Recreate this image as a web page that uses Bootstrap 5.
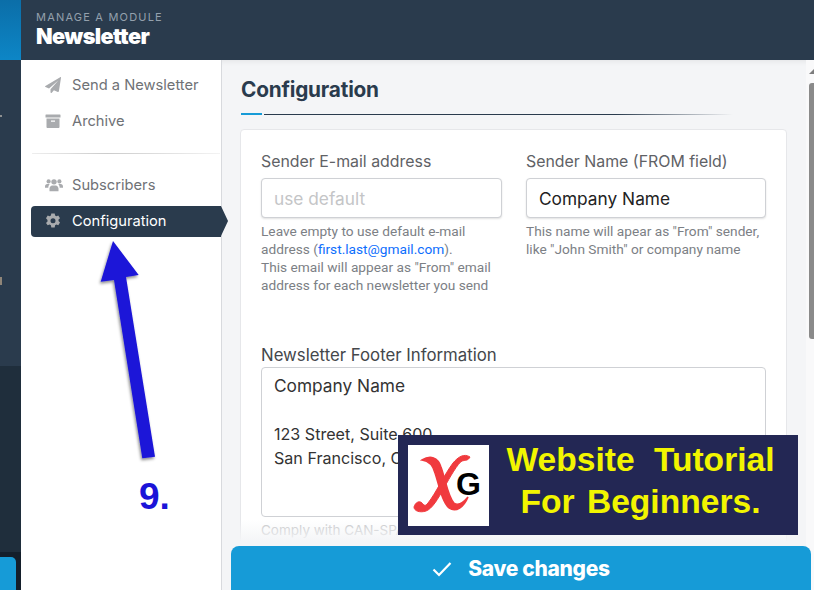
<!DOCTYPE html>
<html lang="en">
<head>
    <meta charset="UTF-8">
    <meta name="viewport" content="width=device-width, initial-scale=1.0">
    <title>Newsletter Configuration</title>
    <link rel="stylesheet" href="https://cdn.jsdelivr.net/npm/bootstrap@5.3.0/dist/css/bootstrap.min.css">
    <script src="https://cdn.jsdelivr.net/npm/bootstrap@5.3.0/dist/js/bootstrap.bundle.min.js"></script>
    <style>
        html, body { height: 100%; overflow: hidden; }
        body { font-family: "Inter", "Liberation Sans", sans-serif; background: #f4f5f7; }
        .app-shell { width: 814px; height: 590px; position: relative; overflow: hidden; }
        .left-rail { width: 21px; background: #2a3b4d; position: relative; }
        .rail-logo { height: 60px; background: linear-gradient(#0b6ea8, #0d86c6); }
        .rail-top { height: 306px; background: #2a3b4d; }
        .rail-mid { height: 186px; background: #1f2e3c; }
        .rail-bottom { flex: 1; background: #141f2b; padding-top: 5px; }
        .rail-tab { width: 16px; height: 33px; background: #169bd7; border-top-right-radius: 5px; }
        .rail-speck { position: absolute; left: 0; width: 2px; background: #8d8f90; }
        .speck-one { top: 115px; height: 2px; }
        .speck-two { top: 277px; height: 8px; background: #8f8578; }
        .module-head { height: 60px; background: #2a3b4d; padding-left: 15px; padding-top: 10px; }
        .module-over { font-size: 11px; letter-spacing: 1.2px; color: #94a0ac; line-height: 14px; }
        .module-title { font-size: 21.6px; font-weight: 900; letter-spacing: -.6px; color: #fff; line-height: 24px; }
        .side-menu { width: 201px; background: #fff; border-right: 1px solid #d8dade; padding: 7px 0 0 10px; flex: none; }
        .menu-row { height: 36px; padding-left: 14px; gap: 11px; font-size: 14.7px; color: #6f7276; text-decoration: none; }
        .menu-row svg { width: 16px; height: 16px; fill: #a9abae; flex: none; }
        .menu-row svg.icon-wide { width: 18px; height: 16px; margin-right: -2px; }
        .menu-active { height: 31px; width: 190px; background: #2a3b4d; color: #fff; border-radius: 4px 0 0 4px; position: relative; margin-top: 3px; padding-bottom: 1px; }
        .menu-active::after { content: ""; position: absolute; left: 190px; top: 0; border-left: 7px solid #2a3b4d; border-top: 15.5px solid transparent; border-bottom: 15.5px solid transparent; }
        .menu-active svg { fill: #a9abae; }
        .menu-sep { height: 1px; width: 188px; margin: 14px 0 13px 1px; background: linear-gradient(90deg, #eee, #ccc 40%, #f3f3f3); }
        .work-area { position: relative; overflow: hidden; box-shadow: inset 0 7px 6px -6px rgba(0,0,0,.08); }
        .page-title { font-size: 20.8px; font-weight: 700; color: #2a3b4d; letter-spacing: -.2px; margin: 0; padding: 17px 0 0 19px; line-height: 26px; height: 53px; }
        .title-rule { margin-left: 19px; gap: 2px; height: 2px; }
        .rule-blue { width: 21px; height: 2px; background: #169bd7; }
        .rule-dark { width: 469px; height: 1px; background: linear-gradient(90deg, #2a3b4d 75%, rgba(42,59,77,0)); }
        .form-panel { width: 547px; height: 450px; margin: 14px 0 0 18px; background: #fff; border: 1px solid #e6e7ea; border-radius: 4px; padding: 21px 20px 20px; }
        .field-name { font-size: 15.9px; color: #5f6266; line-height: 22px; margin-bottom: 5px; white-space: nowrap; }
        .field-box { height: 40px; border: 1px solid #cfd1d5; border-radius: 4px; font-size: 17.3px; padding: 0 12px; color: #222; box-shadow: 0 1px 2px rgba(0,0,0,.12); }
        .field-box::placeholder { color: #c4c5c7; opacity: 1; }
        .field-help { font-family: "Roboto", "Liberation Sans", sans-serif; font-size: 13.7px; line-height: 18px; color: #7c8085; margin-top: 4px; }
        .field-help a { color: #0d6efd; text-decoration: none; }
        .col-mail { width: 241px; }
        .col-name { width: 240px; margin-left: 24px; }
        .footer-name { font-size: 16.8px; color: #44474b; line-height: 22px; margin: 50px 0 1px; }
        .footer-box { height: 150px; border: 1px solid #cfd1d5; border-radius: 4px; font-size: 17.3px; line-height: 24px; padding: 6px 12px; color: #333; white-space: pre-line; }
        .addr-lines { font-size: 16.1px; }
        .comply-note { font-size: 13.5px; color: #c4c5c7; margin-top: 5px; line-height: 16px; white-space: nowrap; }
        .save-bar { position: absolute; left: 9px; right: 3px; top: 486px; height: 44px; padding-top: 2px; background: #169bd7; color: #fff; border: 0; border-radius: 8px 8px 0 0; font-size: 21px; font-weight: 800; letter-spacing: -.3px; gap: 16px; }
        .save-fade { position: absolute; left: 0; right: 0; top: 460px; height: 26px; background: linear-gradient(rgba(244,245,247,0), #f4f5f7 85%); }
        .scroll-bar { position: absolute; right: 0; top: 0; width: 8px; height: 590px; background: #f9f9fa; }
        .scroll-thumb { position: absolute; top: 23px; left: 3px; width: 5px; height: 256px; background: #8a8a8a; border-radius: 3px 0 0 3px; }
        .scroll-up { position: absolute; top: 9px; left: 3px; border-left: 5px solid transparent; border-right: 5px solid transparent; border-bottom: 5px solid #7d7d7d; }
        .promo-box { position: absolute; left: 398px; top: 435px; width: 400px; height: 100px; background: #232754; }
        .promo-logo { position: absolute; left: 10px; top: 10px; width: 81px; height: 81px; background: #fff; }
        .promo-text { position: absolute; left: 83px; top: 4px; width: 319px; text-align: center; font-family: "Liberation Sans", Arial, sans-serif; font-weight: 700; font-size: 33.6px; line-height: 42px; color: #f2f500; word-spacing: 3px; }
        .promo-first { word-spacing: 10px; }
        .mark-arrow { position: absolute; left: 90px; top: 236px; width: 70px; height: 230px; }
        .mark-nine { position: absolute; left: 139px; top: 477px; font-family: "Liberation Sans", Arial, sans-serif; font-weight: 700; font-size: 37px; line-height: 40px; color: #1b14d8; }
    </style>
</head>
<body>
    <div class="app-shell d-flex">
        <!-- Dark rail -->
        <div class="left-rail d-flex flex-column flex-shrink-0">
            <div class="rail-logo"></div>
            <div class="rail-top"></div>
            <div class="rail-mid"></div>
            <div class="rail-bottom"><div class="rail-tab"></div></div>
            <div class="rail-speck speck-one"></div>
            <div class="rail-speck speck-two"></div>
        </div>

        <div class="flex-grow-1 d-flex flex-column">
            <div class="module-head">
                <div class="module-over">MANAGE A MODULE</div>
                <div class="module-title">Newsletter</div>
            </div>

            <div class="flex-grow-1 d-flex">
                <!-- Side menu -->
                <div class="side-menu">
                    <a class="menu-row d-flex align-items-center" href="#">
                        <svg viewBox="0 0 16 16"><path d="M15.600.1.400 8.900c-.5.300-.5 1 .1 1.200l3.500 1.500L13.500 3.200 5.500 12.300v2.900c0 .7.800 1 1.300.500l2.100-2.500 3.900 1.700c.4.200 1 0 1.100-.6L16 .7c.1-.5-.1-.8-.4-.6z"/></svg>
                        Send a Newsletter
                    </a>
                    <a class="menu-row d-flex align-items-center" href="#">
                        <svg viewBox="0 0 16 16"><path d="M1 1.500h14c.3 0 .5.200.5.500v2.500H.5V2c0-.3.200-.5.500-.5zM1.500 5.500h13V14c0 .5-.4 1-1 1h-11c-.6 0-1-.5-1-1zm4.500 2v1.200h4V7.500z"/></svg>
                        Archive
                    </a>
                    <div class="menu-sep"></div>
                    <a class="menu-row d-flex align-items-center" href="#">
                        <svg class="icon-wide" viewBox="0 0 20 16"><circle cx="4" cy="4" r="2.300"/><circle cx="16" cy="4" r="2.300"/><circle cx="10" cy="4.500" r="3"/><path d="M5 15v-3c0-2 1.500-3.500 3-3.500h4c1.500 0 3 1.500 3 3.500v3zM0 10c0-2 1-3 2.500-3h2.800C4.200 8 3.700 9.500 3.700 11H0zM20 10c0-2-1-3-2.500-3h-2.800c1.100 1 1.600 2.500 1.600 4H20z"/></svg>
                        Subscribers
                    </a>
                    <a class="menu-row menu-active d-flex align-items-center" href="#">
                        <svg viewBox="0 0 16 16"><path fill-rule="evenodd" d="M9.700.5l.4 2 1.300.7 1.900-.7 1.700 2.800-1.500 1.300v1.500l1.500 1.300-1.700 2.800-1.900-.7-1.300.8-.4 2.200H6.300l-.4-2.200-1.300-.8-1.900.7L1 9.900l1.500-1.300V7.100L1 5.300 2.700 2.500l1.900.7 1.300-.7.400-2zM8 5.300a2.500 2.500 0 1 0 0 5 2.500 2.500 0 0 0 0-5z"/></svg>
                        Configuration
                    </a>
                </div>

                <!-- Form area -->
                <div class="work-area flex-grow-1">
                    <h1 class="page-title">Configuration</h1>
                    <div class="title-rule d-flex align-items-center">
                        <div class="rule-blue"></div>
                        <div class="rule-dark"></div>
                    </div>
                    <div class="form-panel">
                        <div class="d-flex">
                            <div class="col-mail">
                                <div class="field-name">Sender E-mail address</div>
                                <input class="form-control field-box" type="text" placeholder="use default">
                                <div class="field-help">Leave empty to use default e-mail address (<a href="#">first.last@gmail.com</a>).<br>This email will appear as "From" email address for each newsletter you send</div>
                            </div>
                            <div class="col-name">
                                <div class="field-name">Sender Name (FROM field)</div>
                                <input class="form-control field-box" type="text" value="Company Name">
                                <div class="field-help">This name will apear as "From" sender, like "John Smith" or company name</div>
                            </div>
                        </div>
                        <div class="footer-name">Newsletter Footer Information</div>
                        <div class="footer-box">Company Name

<span class="addr-lines">123 Street, Suite 600
San Francisco, CA 94107</span></div>
                        <div class="comply-note">Comply with CAN-SPAM laws</div>
                    </div>
                    <div class="save-fade"></div>
                    <div class="scroll-bar"><div class="scroll-up"></div><div class="scroll-thumb"></div></div>
                    <button class="save-bar d-flex align-items-center justify-content-center" type="button">
                        <svg width="20" height="16" viewBox="0 0 20 16"><path d="M1.500 8.500l5.500 5.500L18.500 2" fill="none" stroke="#fff" stroke-width="2.200"/></svg>
                        Save changes
                    </button>
                </div>
            </div>
        </div>

        <!-- Tutorial overlay -->
        <svg class="mark-arrow" viewBox="0 0 70 230">
            <defs><filter id="arrowShadow"><feDropShadow dx="-1" dy="2" stdDeviation="1.500" flood-opacity=".45"/></filter></defs>
            <polygon filter="url(#arrowShadow)" fill="#1b14d8" points="23,5 48.700,39 36,41 65,220.700 52.300,222.300 24,44 10.700,45.700"/>
        </svg>
        <div class="mark-nine">9.</div>
        <div class="promo-box">
            <div class="promo-logo">
                <svg width="81" height="81" viewBox="0 0 81 81">
                    <path d="M14 15C22 10 30 12 33 22 38 36 40 52 46 58 50 61 55 58 60 52 56 62 48 68 41 63 34 57 31 40 27 28 25 20 21 16 14 15z" fill="#f03a3e" stroke="#f03a3e" stroke-width="1.500"/>
                    <path d="M62 12C56 8 50 12 45 18 36 30 28 48 20 58 17 62 16 60 14 58 11 55 7 58 6 62 6 66 12 68 18 66 24 64 30 54 36 43 42 32 50 18 54 16 57 15 60 16 62 12z" fill="#f03a3e" stroke="#f03a3e" stroke-width="1"/>
                    <text x="48" y="50" font-family="Liberation Sans, Arial, sans-serif" font-weight="700" font-size="32" fill="#000">G</text>
                </svg>
            </div>
            <div class="promo-text"><span class="promo-first">Website Tutorial</span><br>For Beginners.</div>
        </div>
    </div>
</body>
</html>
